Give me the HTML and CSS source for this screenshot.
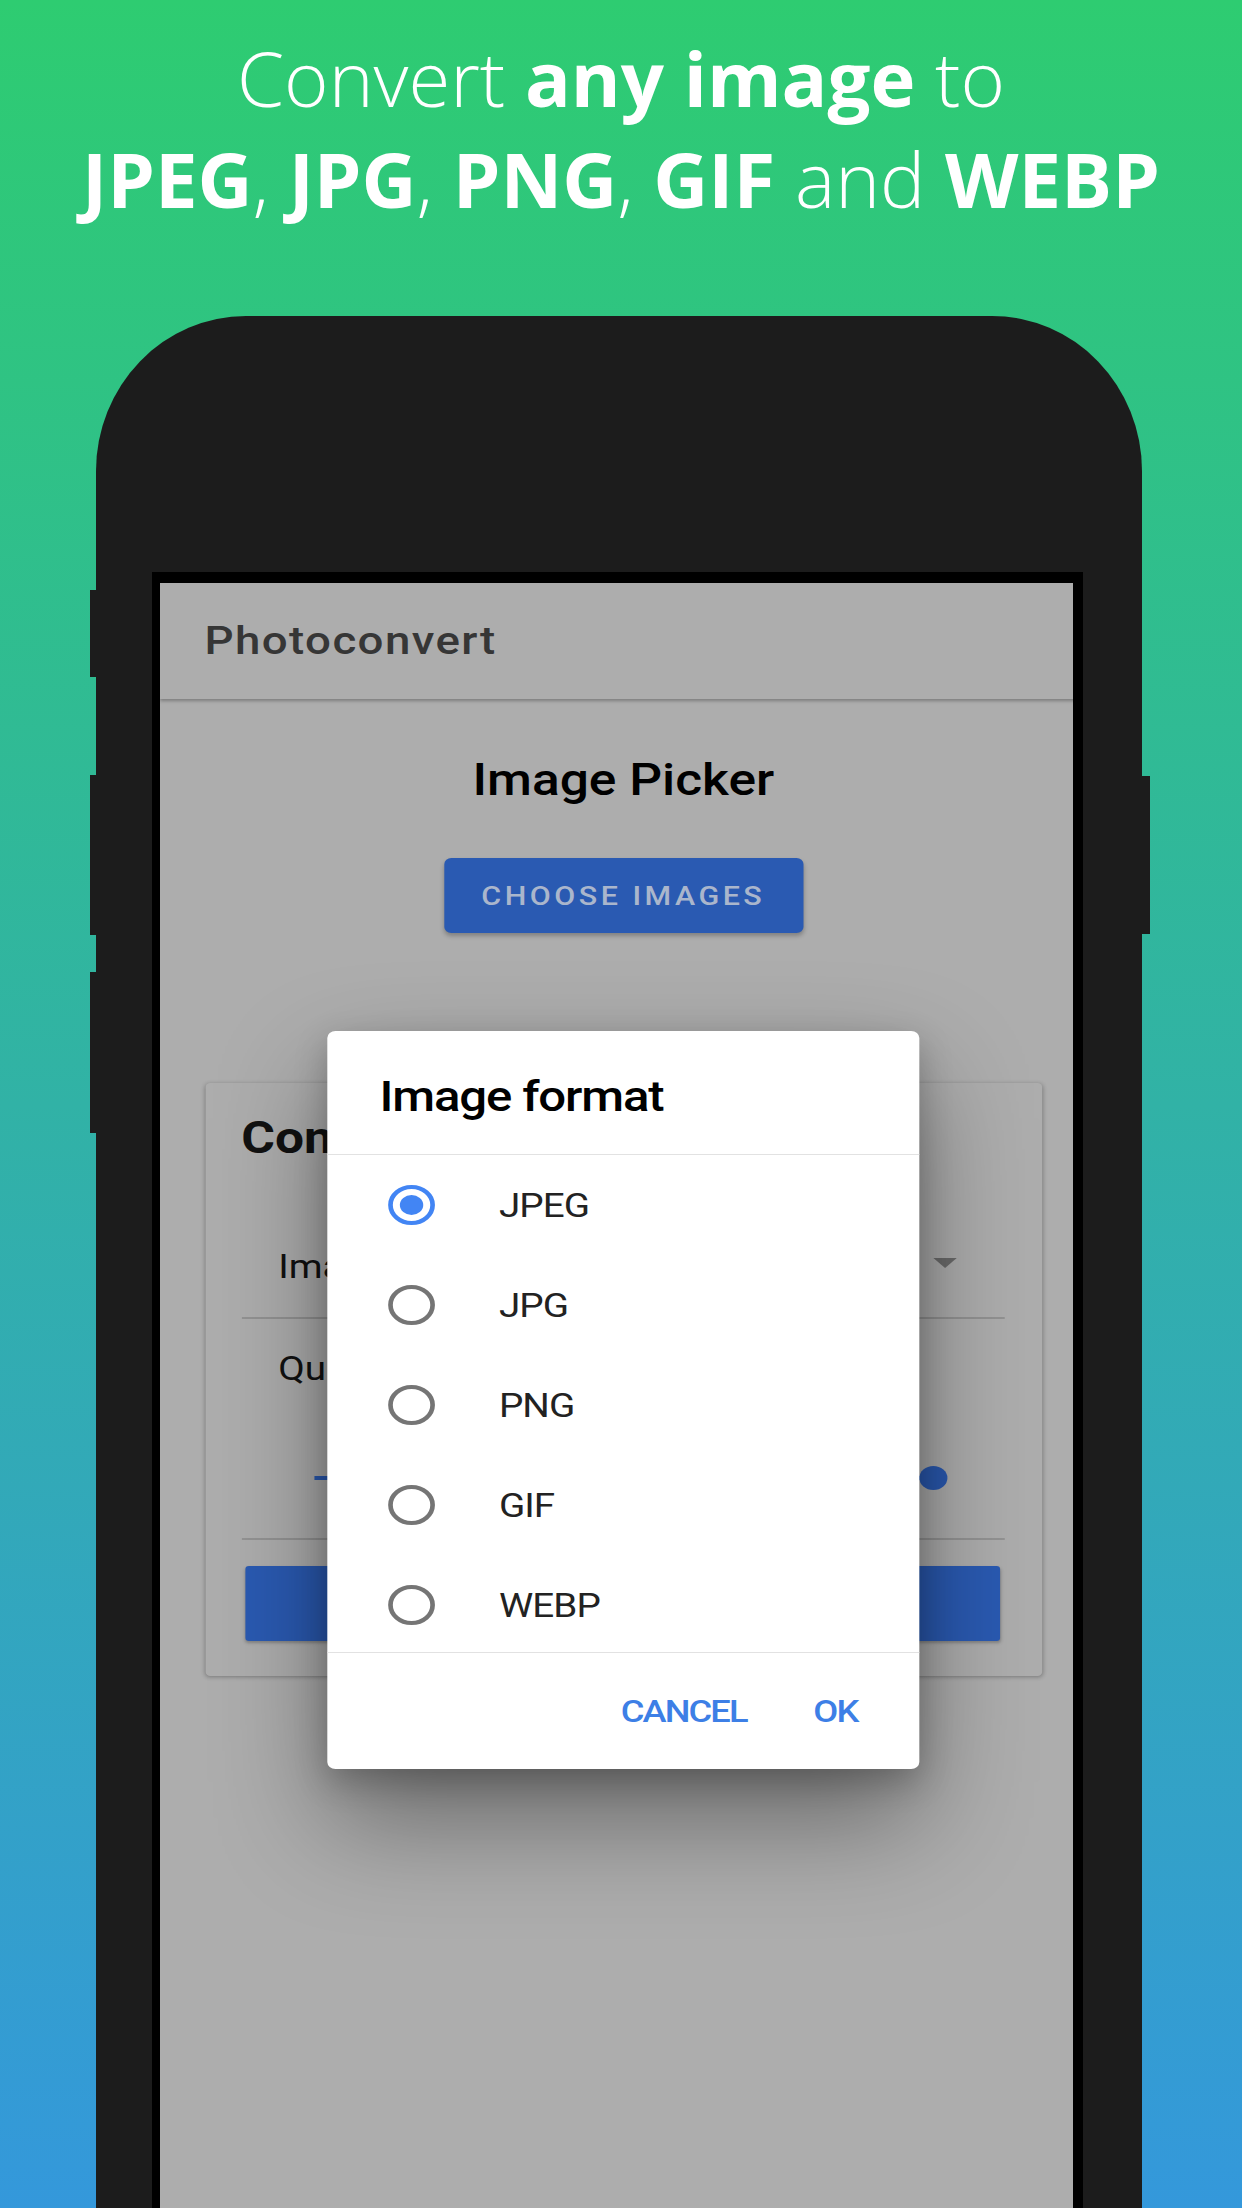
FILE: index.html
```html
<!DOCTYPE html>
<html lang="en">
<head>
<meta charset="utf-8">
<title>Photoconvert</title>
<link rel="stylesheet" href="styles.css">
</head>
<body>
  <h1 class="headline">Convert <b>any image</b> to<br><b>JPEG</b>, <b>JPG</b>, <b>PNG</b>, <b>GIF</b> and <b>WEBP</b></h1>

  <div class="phone">
    <span class="side side-l1"></span>
    <span class="side side-l2"></span>
    <span class="side side-l3"></span>
    <span class="side side-r1"></span>
    <div class="bezel">
      <div class="screen">
        <div class="screen-inner">
          <header class="appbar">Photoconvert</header>
          <main class="main">
            <h2 class="picker-title">Image Picker</h2>
            <div class="choose">CHOOSE IMAGES</div>
            <section class="card">
              <div class="card-title">Con</div>
              <div class="dropdown"><span>Ima</span><span class="caret"></span></div>
              <div class="quality">Qu</div>
              <div class="slider"><span class="track"></span><span class="thumb"></span></div>
              <div class="divider"></div>
              <div class="convert"></div>
            </section>
          </main>

          <div class="dialog">
            <div class="dialog-title">Image format</div>
            <ul class="options">
              <li class="option"><span class="radio radio-on"></span><span class="label">JPEG</span></li>
              <li class="option"><span class="radio"></span><span class="label">JPG</span></li>
              <li class="option"><span class="radio"></span><span class="label">PNG</span></li>
              <li class="option"><span class="radio"></span><span class="label">GIF</span></li>
              <li class="option"><span class="radio"></span><span class="label">WEBP</span></li>
            </ul>
            <div class="actions">
              <span class="action">CANCEL</span>
              <span class="action">OK</span>
            </div>
          </div>
        </div>
      </div>
    </div>
  </div>
</body>
</html>
```
FILE: styles.css
```css
* { box-sizing: border-box; }
html, body { margin: 0; padding: 0; }
body {
  width: 1242px;
  height: 2208px;
  overflow: hidden;
  background: linear-gradient(180deg, #2ecc71 0%, #3498db 100%);
  font-family: Roboto, "Noto Sans", sans-serif;
}

.headline {
  margin: 0;
  padding-top: 27px;
  font-family: "Open Sans", "Liberation Sans", sans-serif;
  font-weight: 300;
  font-size: 76px;
  line-height: 101px;
  color: #fff;
  text-align: center;
}
.headline b { font-weight: 700; }

.phone {
  position: relative;
  margin: 87px 0 0 96px;
  width: 1046px;
  height: 1892px;
  padding-top: 256px;
  background: #1c1c1c;
  border-radius: 150px 150px 0 0 / 155px 155px 0 0;
}
.side { position: absolute; background: #1c1c1c; }
.side-l1 { left: -6px; width: 6px; top: 274px; height: 87px; }
.side-l2 { left: -6px; width: 6px; top: 459px; height: 160px; }
.side-l3 { left: -6px; width: 6px; top: 656px; height: 161px; }
.side-r1 { right: -8px; width: 8px; top: 460px; height: 158px; }

.bezel {
  margin-left: 56px;
  width: 931px;
  height: 1636px;
  padding: 11px 10px 0 8px;
  background: #000;
}
.screen {
  width: 913px;
  height: 1625px;
  background: #adadad;
  overflow: hidden;
}
.screen-inner {
  position: relative;
  width: 792px;
  height: 1625px;
  transform: scaleX(1.17);
  transform-origin: 0 0;
}

.appbar {
  position: relative;
  z-index: 1;
  height: 116px;
  display: flex;
  align-items: center;
  padding-left: 38px;
  background: #adadad;
  box-shadow: 0 2px 3px rgba(0, 0, 0, 0.28);
  font-size: 39px;
  font-weight: 500;
  letter-spacing: 1.2px;
  color: #363636;
}

.main {
  display: flex;
  flex-direction: column;
  align-items: center;
}
.picker-title {
  margin: 55px 0 0;
  font-size: 44px;
  line-height: 52px;
  font-weight: 500;
  color: #000;
}
.choose {
  margin-top: 52px;
  width: 307px;
  height: 75px;
  display: flex;
  align-items: center;
  justify-content: center;
  background: #2a5ab2;
  border-radius: 6px;
  box-shadow: 0 3px 4px rgba(0, 0, 0, 0.25);
  color: #aab6cc;
  font-size: 26px;
  font-weight: 500;
  letter-spacing: 3px;
}

.card {
  align-self: stretch;
  margin: 150px 38.5px 0;
  padding: 29px 32px 35px 31px;
  background: #adadad;
  border-radius: 4px;
  box-shadow: 0 1px 4px rgba(0, 0, 0, 0.3);
}
.card-title {
  font-size: 44px;
  line-height: 52px;
  font-weight: 700;
  color: #111;
}
.dropdown {
  margin-top: 83px;
  display: flex;
  align-items: center;
  justify-content: space-between;
  padding: 0 40.5px 30px 31.5px;
  border-bottom: 2px solid #929292;
  font-size: 33px;
  line-height: 40px;
  color: #111;
}
.caret {
  width: 0;
  height: 0;
  margin-top: -8px;
  border-left: 10px solid transparent;
  border-right: 10px solid transparent;
  border-top: 10px solid #6b6b6b;
}
.quality {
  margin-top: 30px;
  padding-left: 31.5px;
  font-size: 33px;
  line-height: 40px;
  color: #111;
}
.slider {
  margin: 77px 48.5px 0 62.5px;
  height: 24px;
  display: flex;
  align-items: center;
}
.track { flex: 1; height: 4px; background: #2a5ab2; }
.thumb {
  width: 24px;
  height: 24px;
  margin-left: -12px;
  border-radius: 50%;
  background: #2a5ab2;
}
.divider { margin-top: 48px; height: 2px; background: #939393; }
.convert {
  margin: 26px 3.5px 0;
  height: 75px;
  background: #2a5ab2;
  border-radius: 3px;
  box-shadow: 0 2px 3px rgba(0, 0, 0, 0.25);
}

.dialog {
  position: absolute;
  z-index: 5;
  left: 142.7px;
  top: 448px;
  width: 506px;
  height: 738px;
  background: #fff;
  border-radius: 7px;
  box-shadow: 0 50px 100px rgba(0, 0, 0, 0.4), 0 12px 30px rgba(0, 0, 0, 0.22);
}
.dialog-title {
  padding: 40px 0 31px 45px;
  font-size: 42px;
  line-height: 52px;
  font-weight: 500;
  letter-spacing: -1px;
  color: #000;
  border-bottom: 1px solid #e2e2e2;
}
.options { list-style: none; margin: 0; padding: 0; }
.option {
  height: 100px;
  display: flex;
  align-items: center;
  padding-left: 52.5px;
}
.radio {
  flex-shrink: 0;
  width: 40px;
  height: 40px;
  border-radius: 50%;
  border: 4px solid #757575;
  display: flex;
  align-items: center;
  justify-content: center;
}
.radio-on { border-color: #4285f4; }
.radio-on::after {
  content: "";
  width: 20px;
  height: 20px;
  border-radius: 50%;
  background: #4285f4;
}
.label {
  margin-left: 54.5px;
  font-size: 33px;
  letter-spacing: -0.8px;
  color: #222;
}
.actions {
  margin-top: -3px;
  height: 117px;
  border-top: 1px solid #e2e2e2;
  display: flex;
  align-items: center;
  justify-content: flex-end;
  gap: 57px;
  padding-right: 52.5px;
}
.action {
  font-size: 31px;
  font-weight: 500;
  letter-spacing: -1.6px;
  color: #3d7fe6;
}
```
